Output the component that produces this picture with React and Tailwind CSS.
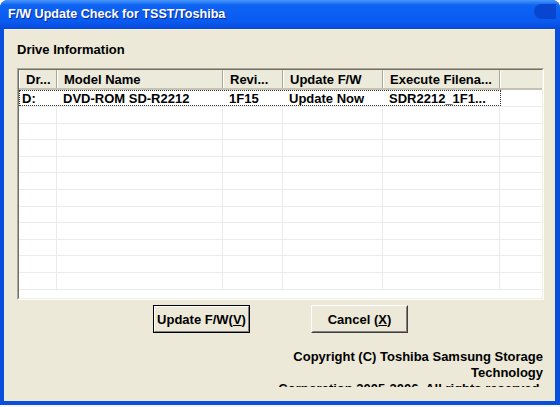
import React from 'react';

const cols = [
  { label: 'Dr...', w: 'w-[38px]' },
  { label: 'Model Name', w: 'w-[166px]' },
  { label: 'Revi...', w: 'w-[60px]' },
  { label: 'Update F/W', w: 'w-[100px]' },
  { label: 'Execute Filena...', w: 'w-[117px]' },
];

const drive = ['D:', 'DVD-ROM SD-R2212', '1F15', 'Update Now', 'SDR2212_1F1...'];

const emptyRows = Array.from({ length: 11 });

const DriveList = () => (
  <div className="h-[232px] border border-t-[#ACA899] border-l-[#ACA899] border-b-white border-r-white">
    <div className="h-full overflow-hidden bg-white border border-t-[#716F64] border-l-[#716F64] border-b-[#F1EFE2] border-r-[#F1EFE2]">
      {/* column headers */}
      <div className="flex h-[20px] border-b-2 border-[#C5C2B2] bg-[#EBEADB]">
        {cols.map((c) => (
          <div
            key={c.label}
            className={`${c.w} shrink-0 flex items-center pl-[6px] border-r border-[#ACA899] border-l border-l-white text-[13px] font-bold leading-none whitespace-nowrap overflow-hidden`}
          >
            {c.label}
          </div>
        ))}
        <div className="flex-1 border-l border-l-white" />
      </div>

      {/* the one drive found */}
      <div className="flex h-[17px] border-b border-[#EBEBEB]">
        <div className="flex border border-dotted border-[#333]">
          {drive.map((v, i) => (
            <div
              key={i}
              className={`${i === 0 ? 'w-[37px] pl-[2px]' : cols[i].w + ' pl-[6px]'} shrink-0 flex items-center pt-[1px] text-[13px] font-bold leading-none whitespace-nowrap overflow-hidden`}
            >
              {v}
            </div>
          ))}
        </div>
        <div className="flex-1" />
      </div>

      {emptyRows.map((_, r) => (
        <div key={r} className="flex h-[16.6px] border-b border-[#EBEBEB]">
          {cols.map((c) => (
            <div key={c.label} className={`${c.w} shrink-0 border-r border-[#EBEBEB]`} />
          ))}
          <div className="flex-1" />
        </div>
      ))}
    </div>
  </div>
);

const App = () => {
  return (
    <div className="w-[560px] h-[407px] bg-[#f6f6f6] font-['Liberation_Sans',Arial,sans-serif] text-black">
      <div className="relative h-[405px] flex flex-col rounded-t-[8px] overflow-hidden bg-[#0A4FDC]">
        {/* title bar */}
        <div className="relative h-[29px] shrink-0 flex items-center pl-[8px] bg-[linear-gradient(180deg,#4a97fa_0%,#0d63f4_18%,#0a5af0_75%,#0749da_100%)]">
          <span className="text-white text-[12.6px] font-bold leading-none [text-shadow:1px_1px_0_#0a2a9a]">
            F/W Update Check for TSST/Toshiba
          </span>
          <div className="absolute right-[4px] top-[4px] w-[22px] h-[15px] rounded-l-full rounded-r-[3px] bg-[#0846cf]" />
        </div>

        {/* dialog body */}
        <div className="flex-1 ml-[4px] mr-[5px] mb-[4px] bg-[#ECE9D8] border-t border-[#f4f3ee] flex flex-col pt-[12px] pl-[13px] pr-[11px]">
          <p className="text-[13px] font-bold leading-[16px]">Drive Information</p>

          <div className="mt-[10px]">
            <DriveList />
          </div>

          <div className="mt-[5px] flex justify-center gap-[61px]">
            <button className="w-[97px] h-[28px] border border-black bg-[#ECE9D8] p-0">
              <span className="flex items-center justify-center w-full h-full border border-t-white border-l-white border-b-[#808080] border-r-[#808080] text-[13px] font-bold leading-none">
                Update F/W(<span className="underline">V</span>)
              </span>
            </button>
            <button className="w-[97px] h-[28px] border border-t-white border-l-white border-b-[#404040] border-r-[#404040] bg-[#ECE9D8] p-0">
              <span className="flex items-center justify-center w-full h-full border border-t-[#ECE9D8] border-l-[#ECE9D8] border-b-[#808080] border-r-[#808080] text-[13px] font-bold leading-none">
                Cancel (<span className="underline">X</span>)
              </span>
            </button>
          </div>

          {/* the label is too short for its text, so the last line is cut */}
          <div className="mt-[16px] h-[38px] overflow-hidden text-right pr-[1px] text-[13px] font-bold leading-[16px]">
            <p>Copyright (C) Toshiba Samsung Storage</p>
            <p>Technology</p>
            <p>Corporation 2005-2006. All rights reserved.</p>
          </div>
        </div>
      </div>
    </div>
  );
};

export default App;
